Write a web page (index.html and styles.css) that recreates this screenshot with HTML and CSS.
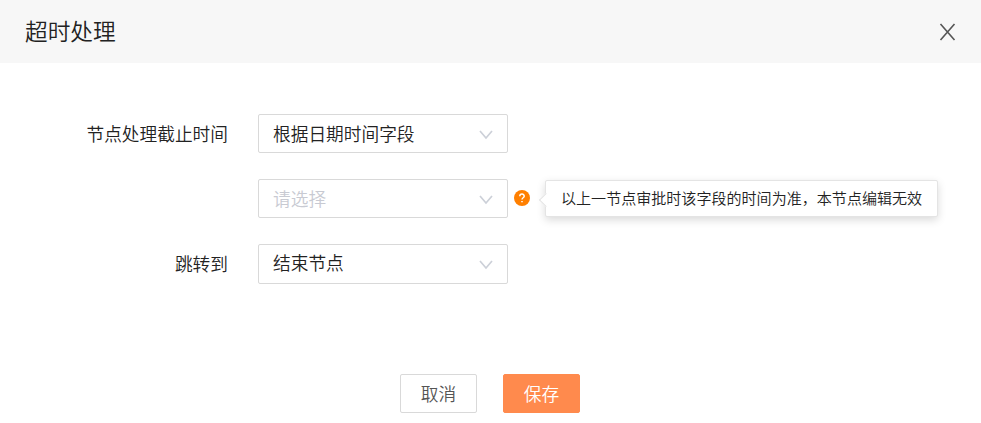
FILE: index.html
```
<!DOCTYPE html>
<html lang="zh-CN">
<head>
  <meta charset="UTF-8">
  <meta name="viewport" content="width=device-width, initial-scale=1.0">
  <title>超时处理</title>
  <link rel="stylesheet" href="styles.css">
</head>
<body>

  <div class="dialog">
    <div class="dialog-header">
      <span class="dialog-title">超时处理</span>
      <svg class="close" viewBox="0 0 16 18"><path d="M1 1L15 17M15 1L1 17"/></svg>
    </div>

    <div class="dialog-body">
      <div class="form-row">
        <label class="label">节点处理截止时间</label>
        <div class="select">
          <span>根据日期时间字段</span>
          <svg class="arrow" viewBox="0 0 14 10"><path d="M1 1L7 8L13 1"/></svg>
        </div>
      </div>

      <div class="form-row">
        <label class="label"></label>
        <div class="select">
          <span class="placeholder">请选择</span>
          <svg class="arrow" viewBox="0 0 14 10"><path d="M1 1L7 8L13 1"/></svg>
        </div>
        <svg class="help" viewBox="0 0 16 16">
          <circle cx="8" cy="8" r="8"/>
          <path d="M5.8 6.3C5.8 3.4 10.2 3.4 10.2 6.2C10.2 7.7 8 7.8 8 9.5"/>
          <path d="M8 10.9V12.3"/>
        </svg>
        <div class="tooltip">以上一节点审批时该字段的时间为准，本节点编辑无效</div>
      </div>

      <div class="form-row">
        <label class="label">跳转到</label>
        <div class="select select-last">
          <span>结束节点</span>
          <svg class="arrow" viewBox="0 0 14 10"><path d="M1 1L7 8L13 1"/></svg>
        </div>
      </div>
    </div>

    <div class="dialog-footer">
      <button class="btn">取消</button>
      <button class="btn btn-primary">保存</button>
    </div>
  </div>

</body>
</html>
```

FILE: styles.css
```
* {
  box-sizing: border-box;
}

body {
  margin: 0;
  background: #fff;
  color: #222;
  font-family: "Noto Sans CJK SC", sans-serif;
  font-size: 17.7px;
  font-weight: 350;
  overflow: hidden;
}

.dialog {
  height: 423px;
}

.dialog-header {
  display: flex;
  align-items: center;
  justify-content: space-between;
  height: 63px;
  padding: 0 25px;
  background: #f7f7f7;
}

.dialog-title {
  padding-bottom: 1px;
  font-size: 22.7px;
  line-height: 32px;
}

.close {
  width: 17px;
  height: 18px;
  fill: none;
  stroke: #555;
  stroke-width: 1.6;
}

.dialog-body {
  display: flex;
  flex-direction: column;
  gap: 26px;
  padding-top: 51px;
}

.form-row {
  display: flex;
  align-items: center;
}

.label {
  width: 228px;
  margin-right: 30px;
  padding-bottom: 2px;
  text-align: right;
}

.select {
  display: flex;
  align-items: center;
  justify-content: space-between;
  width: 250px;
  height: 39px;
  padding: 0 14px;
  border: 1px solid #d9d9d9;
  border-radius: 2px;
}

.select span {
  padding-bottom: 2px;
}

.select-last {
  height: 40px;
}

.select-last span {
  padding-bottom: 4px;
}

.placeholder {
  color: #c8cad2;
}

.arrow {
  width: 14px;
  height: 10px;
  margin-top: 2px;
  fill: none;
  stroke: #ccd0d8;
  stroke-width: 1.7;
}

.help {
  width: 16px;
  height: 16px;
  margin: 0 15px 1px 6px;
  fill: #ff7f00;
}

.help path {
  fill: none;
  stroke: #fff;
  stroke-width: 1.5;
}

.tooltip {
  position: relative;
  width: 393px;
  height: 37px;
  padding-left: 15px;
  border: 1px solid #e4e4e4;
  border-radius: 2px;
  background: #fff;
  box-shadow: 0 3px 9px rgba(0, 0, 0, 0.15);
  font-size: 15.05px;
  line-height: 34px;
  white-space: nowrap;
}

/* Arrow pointing at the help icon */
.tooltip::before {
  content: "";
  position: absolute;
  left: -5px;
  top: 14px;
  width: 9px;
  height: 9px;
  border-left: 1px solid #e4e4e4;
  border-bottom: 1px solid #e4e4e4;
  background: #fff;
  transform: rotate(45deg);
}

.dialog-footer {
  display: flex;
  gap: 26px;
  margin-top: 90px;
  padding-left: 400px;
}

.btn {
  width: 77px;
  height: 39px;
  padding: 0 0 2px;
  border: 1px solid #d9d9d9;
  border-radius: 2px;
  background: #fff;
  color: #555;
  font: inherit;
}

.btn-primary {
  border-color: #ff8a4d;
  background: #ff8a4d;
  color: #fff;
}
```
